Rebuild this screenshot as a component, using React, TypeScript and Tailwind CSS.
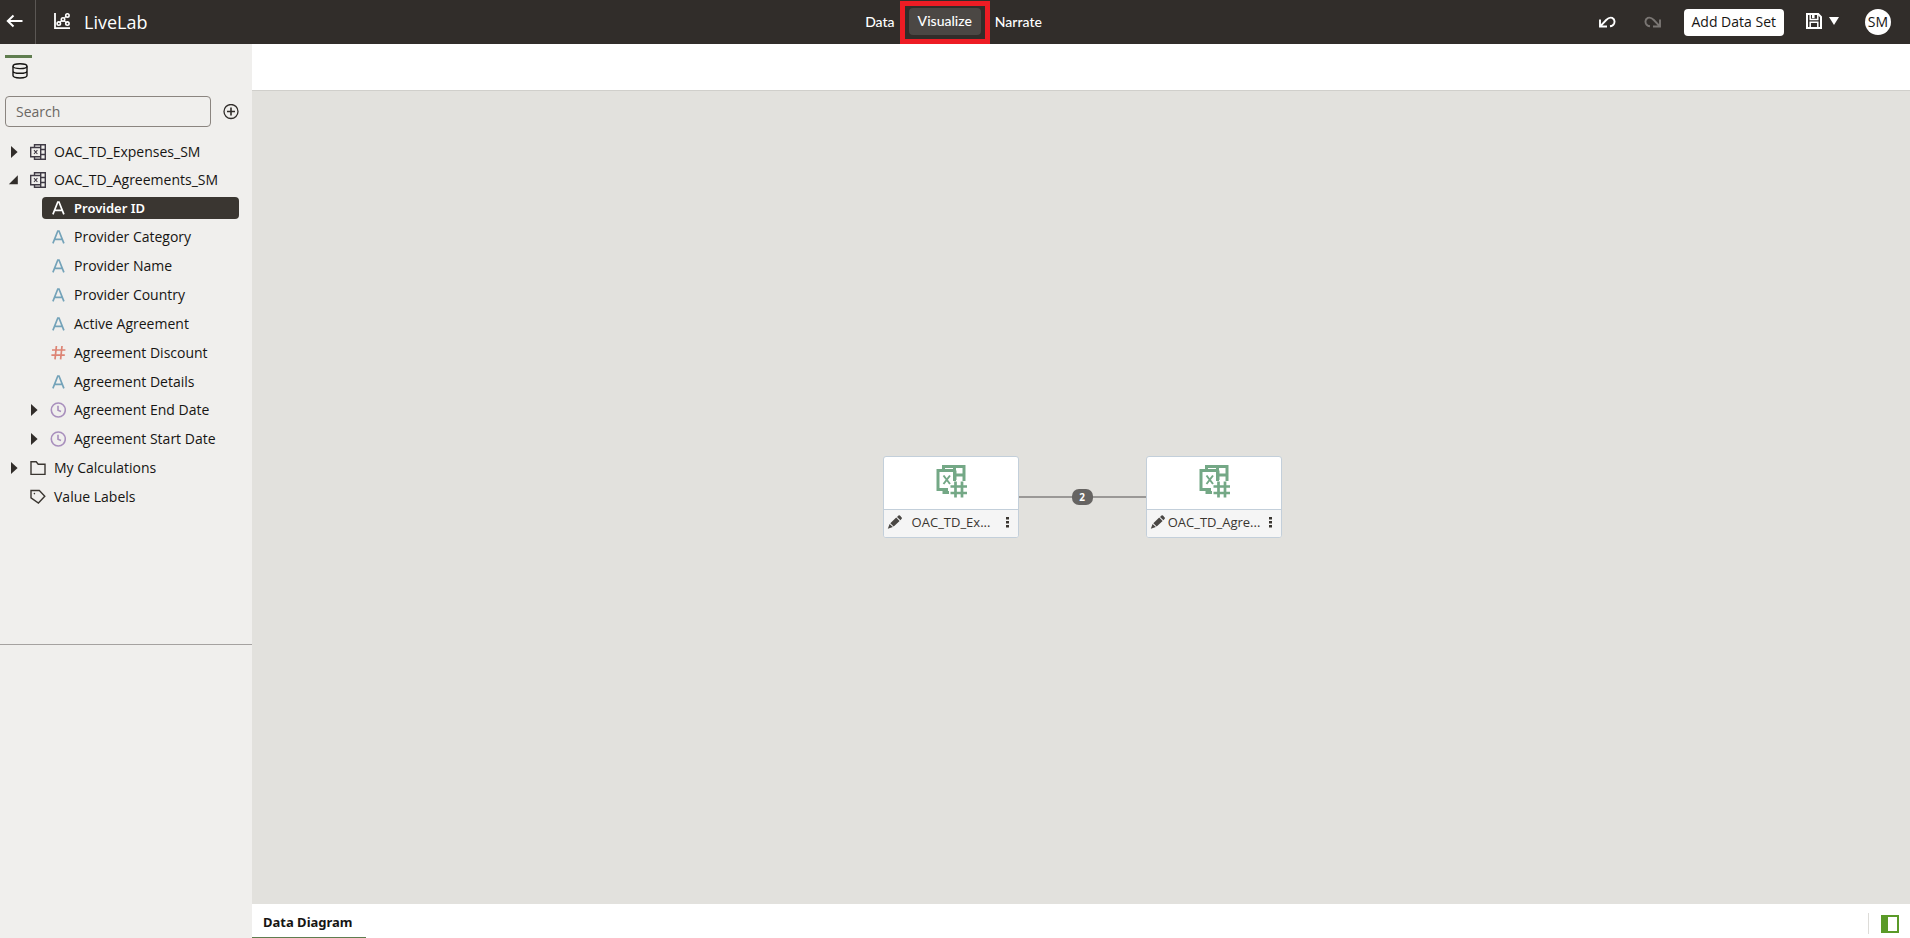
import React, { useState } from "react";

type IconKind = "text" | "number" | "date" | "sheet" | "folder" | "tag";

interface TreeNode {
  label: string;
  icon: IconKind;
  level: 0 | 1;
  state?: "open" | "closed";
  height: string;
}

const tree: TreeNode[] = [
  { label: "OAC_TD_Expenses_SM", icon: "sheet", level: 0, state: "closed", height: "h-[29px]" },
  { label: "OAC_TD_Agreements_SM", icon: "sheet", level: 0, state: "open", height: "h-7" },
  { label: "Provider ID", icon: "text", level: 1, height: "h-7" },
  { label: "Provider Category", icon: "text", level: 1, height: "h-[29px]" },
  { label: "Provider Name", icon: "text", level: 1, height: "h-[29px]" },
  { label: "Provider Country", icon: "text", level: 1, height: "h-[29px]" },
  { label: "Active Agreement", icon: "text", level: 1, height: "h-[29px]" },
  { label: "Agreement Discount", icon: "number", level: 1, height: "h-[29px]" },
  { label: "Agreement Details", icon: "text", level: 1, height: "h-[29px]" },
  { label: "Agreement End Date", icon: "date", level: 1, state: "closed", height: "h-7" },
  { label: "Agreement Start Date", icon: "date", level: 1, state: "closed", height: "h-[29px]" },
  { label: "My Calculations", icon: "folder", level: 0, state: "closed", height: "h-[29px]" },
  { label: "Value Labels", icon: "tag", level: 0, height: "h-[29px]" },
];

function NodeIcon({ kind, selected }: { kind: IconKind; selected: boolean }) {
  const base = "h-4 w-4 shrink-0 fill-none";
  switch (kind) {
    case "text":
      return (
        <svg viewBox="0 0 16 16" className={selected ? `${base} stroke-white` : `${base} stroke-[#74a3b9]`} strokeWidth="1.7">
          <path d="M2.9 14.4 7.8 2h1.2l4.9 12.4M4.6 10.4h7.6" />
        </svg>
      );
    case "number":
      return (
        <svg viewBox="0 0 16 16" className={`${base} stroke-[#dd8474]`} strokeWidth="1.7">
          <path d="M6.4 1 5 14.4M12 1l-1.4 13.4M2 5h13.4M1.4 10.2h13.4" />
        </svg>
      );
    case "date":
      return (
        <svg viewBox="0 0 16 16" className={`${base} stroke-[#a990bd]`} strokeWidth="1.6">
          <circle cx="8.3" cy="8" r="7" />
          <path d="M8 3.8v4.5l3 1.2" />
        </svg>
      );
    case "sheet":
      return (
        <svg viewBox="0 0 16 16" className={`${base} stroke-[#3f3a45]`} strokeWidth="1.4">
          <path d="M.7 3.5h10v9.2H.7zM4.5 3.5v-2.8h10.8v14.6H4.5v-2.6M10.7.7v14.6M10.7 5.5h4.6M10.7 10.5h4.6" />
          <path d="m4 6.2 3.4 3.8m0-3.8L4 10" strokeWidth="1.1" />
        </svg>
      );
    case "folder":
      return (
        <svg viewBox="0 0 16 16" className={`${base} stroke-[#3a3631]`} strokeWidth="1.4">
          <path d="M1 1.8h5.2l2 2.4H15v10.2H1z" />
        </svg>
      );
    case "tag":
      return (
        <svg viewBox="0 0 16 16" className={`${base} stroke-[#3a3631]`} strokeWidth="1.4">
          <path d="M1 1.5h8.3l5.5 5.7-6.4 6.9L1 8.9z" />
          <circle cx="4.4" cy="4.6" r=".8" className="fill-[#3a3631] stroke-none" />
        </svg>
      );
  }
}

function Twisty({ state }: { state: "open" | "closed" }) {
  return (
    <svg viewBox="0 0 10 12" className="h-3 w-[10px] fill-[#312d2a]">
      <path d={state === "open" ? "M9.8 1.2v9H.8z" : "M3 0 9.6 6 3 12z"} />
    </svg>
  );
}

function TreeRow({ node, selected, onSelect }: { node: TreeNode; selected: boolean; onSelect: () => void }) {
  return (
    <li className={`flex items-center pr-[13px] ${node.height} ${node.level === 1 ? "pl-7" : "pl-2"}`}>
      <span className="flex w-[14px] shrink-0 justify-start">
        {node.state && (
          <button type="button" aria-label={`Toggle ${node.label}`}>
            <Twisty state={node.state} />
          </button>
        )}
      </span>
      <button
        type="button"
        onClick={onSelect}
        className={`flex h-[22px] min-w-0 flex-1 items-center gap-2 rounded px-2 text-left whitespace-nowrap ${
          selected ? "bg-[#3a3631] font-['Noto_Sans',sans-serif] text-[13px] font-semibold text-white" : "text-[#161513]"
        }`}
      >
        <NodeIcon kind={node.icon} selected={selected} />
        {node.label}
      </button>
    </li>
  );
}

function DiagramNode({ label }: { label: string }) {
  return (
    <div className="h-[82px] w-[136px] overflow-hidden rounded-[3px] border border-[#c3cfda] bg-white">
      <div className="flex h-[53px] items-start justify-center border-b border-[#c3cfda] pt-[7px]">
        <svg viewBox="0 0 32 34" className="h-[34px] w-8 fill-none stroke-[#74a886]" strokeWidth="3">
          <path d="M8.5 5V2.5h20.5V17M19.5 2v15M19.5 11h9.5" />
          <path d="M19.5 6.5H3v19h10M20 6.5v9.5M9 25v3.5h5" />
          <path d="m8.5 11.5 6.5 8.5m0-8.5-6.5 8.5" strokeWidth="2" />
          <path d="M20.5 17.5v16M27 17.5v16M15.5 22.5H32M15.5 29H32" strokeWidth="2.7" />
        </svg>
      </div>
      <div className="flex h-[27px] items-center bg-[#f5f5f5] pb-[2px] pl-[3px]">
        <button type="button" aria-label={`Edit ${label}`} className="shrink-0">
          <svg viewBox="0 0 16 16" className="h-4 w-4 fill-[#4a4744]">
            <path d="m.8 14.8 1.8-4.9 3.3 3.1zM3.3 9.2l5.9-5.6 3.4 3.3-5.9 5.6zM10 2.9l1.5-1.4q.7-.5 1.4.1l1.8 1.8q.5.7 0 1.3l-1.3 1.5z" />
          </svg>
        </button>
        <span className="min-w-0 flex-1 pl-[2px] text-center text-[13px] whitespace-nowrap text-[#3a3631]">{label}</span>
        <button type="button" aria-label={`Menu for ${label}`} className="w-5 shrink-0">
          <svg viewBox="0 0 20 12" className="h-3 w-5 fill-[#3a3631]">
            <path d="M8 1h3v2.5H8zM8 5h3v2.5H8zM8 9h3v2.5H8z" />
          </svg>
        </button>
      </div>
    </div>
  );
}

export default function App() {
  const [selected, setSelected] = useState("Provider ID");

  return (
    <div className="flex min-h-screen flex-col bg-white font-['Open_Sans','Noto_Sans',sans-serif] text-sm text-[#161513]">
      <header className="grid h-11 grid-cols-[1fr_auto_1fr] items-center bg-[#312d2a] text-white">
        <div className="flex h-full items-center">
          <button type="button" aria-label="Back" className="flex h-full w-9 items-center border-r border-[#5b5754] pb-[2px] pl-[6px]">
            <svg viewBox="0 0 18 16" className="h-4 w-[18px] fill-none stroke-white" strokeWidth="2">
              <path d="M16.5 8H2M7.5 2.5 1.8 8l5.7 5.5" />
            </svg>
          </button>
          <svg viewBox="0 0 18 18" className="mb-[2px] ml-[17px] h-[18px] w-[18px] fill-none stroke-white" strokeWidth="1.6">
            <path d="M2 1v15.2H17" strokeWidth="1.8" />
            <path d="m6.8 10.4 1.8-1.7M11.2 8.9l1.8 1.4M11.4 5.8l1.6-1.2" strokeWidth="1.2" />
            <circle cx="5.8" cy="11.6" r="1.7" />
            <circle cx="10" cy="7.4" r="1.7" />
            <circle cx="14.4" cy="3.4" r="1.7" />
            <circle cx="14.4" cy="11.6" r="1.7" />
          </svg>
          <h1 className="ml-[13px] text-lg">LiveLab</h1>
        </div>

        <nav className="mr-[3px] mb-px flex items-center gap-[14px] font-['Lato',sans-serif] text-sm font-medium">
          <a href="#data">Data</a>
          <a href="#visualize" className="relative rounded bg-[#4b4744] px-[9px] pt-[3px] pb-[5px] leading-[19px]">
            Visualize
            <span className="pointer-events-none absolute -inset-x-[9px] -top-[7px] -bottom-[9px] border-5 border-[#ed1c24]" />
          </a>
          <a href="#narrate">Narrate</a>
        </nav>

        <div className="flex items-center justify-end pr-[19px]">
          <button type="button" aria-label="Undo">
            <svg viewBox="0 0 18 14" className="h-[14px] w-[18px] fill-none stroke-white" strokeWidth="1.9">
              <path d="M2 4.5v7h7M2.4 11.1 8.2 5q3-3.2 6-2.1 3.2 1.6 2 5.4-1.2 2.7-4.2 3" />
            </svg>
          </button>
          <button type="button" aria-label="Redo" disabled className="ml-7">
            <svg viewBox="0 0 18 14" className="h-[14px] w-[18px] fill-none stroke-[#7a7673]" strokeWidth="1.9">
              <path d="M16 4.5v7H9M15.6 11.1 9.8 5q-3-3.2-6-2.1-3.2 1.6-2 5.4 1.2 2.7 4.2 3" />
            </svg>
          </button>
          <button type="button" className="ml-[22px] h-[27px] rounded bg-white px-2 text-sm text-[#161513]">
            Add Data Set
          </button>
          <button type="button" aria-label="Save" className="mb-[2px] ml-[22px] flex items-center gap-[7px]">
            <svg viewBox="0 0 16 16" className="h-4 w-4 fill-none stroke-white" strokeWidth="2">
              <path d="M1 1h11.2L15 3.8V15H1z" />
              <path d="M4.2 1v5.5h7.6V1M4.2 15V9.2h7.6V15" strokeWidth="1.5" />
              <path d="M6 3.2h2.6" strokeWidth="4" />
            </svg>
            <svg viewBox="0 0 10 8" className="h-2 w-[10px] fill-white">
              <path d="M0 0h10L5 8z" />
            </svg>
          </button>
          <button type="button" aria-label="Account" className="ml-[26px] flex h-[26px] w-[26px] items-center justify-center rounded-full bg-white text-sm text-[#161513]">
            SM
          </button>
        </div>
      </header>

      <div className="flex flex-1">
        <aside className="flex w-[252px] shrink-0 flex-col bg-[#f0efed]">
          <div className="flex h-[600px] flex-col">
            <button type="button" aria-label="Data" className="mt-[11px] ml-[5px] flex w-[27px] flex-col items-center gap-[5px]">
              <span className="h-[3px] w-full bg-[#5f7d4f]" />
              <svg viewBox="0 0 16 16" className="ml-[3px] h-4 w-4 fill-none stroke-[#161513]" strokeWidth="1.4">
                <ellipse cx="8" cy="3.2" rx="7" ry="2.4" />
                <path d="M1 3.2v9.4c0 1.3 3 2.4 7 2.4s7-1.1 7-2.4V3.2M1 7.9c0 1.3 3 2.4 7 2.4s7-1.1 7-2.4" />
              </svg>
            </button>
            <div className="mt-[17px] flex items-center gap-3 pl-[5px]">
              <input
                type="text"
                aria-label="Search"
                placeholder="Search"
                className="h-[31px] w-[206px] rounded border border-[#8b8580] bg-transparent px-[10px] text-sm placeholder:text-[#6b6763]"
              />
              <button type="button" aria-label="Add">
                <svg viewBox="0 0 16 16" className="h-4 w-4 fill-none stroke-[#312d2a]" strokeWidth="1.3">
                  <circle cx="8" cy="7.5" r="7" />
                  <path d="M8 3.5v8M4 7.5h8" strokeWidth="1.6" />
                </svg>
              </button>
            </div>
            <ul className="mt-[10px]">
              {tree.map((node) => (
                <TreeRow key={node.label} node={node} selected={node.label === selected} onSelect={() => setSelected(node.label)} />
              ))}
            </ul>
          </div>
          <div className="flex-1 border-t border-[#a5a2a0]" />
        </aside>

        <main className="flex min-w-0 flex-1 flex-col">
          <div className="h-[47px] border-b border-[#d0cfcb] bg-white" />
          <div className="flex flex-1 items-center justify-center bg-[#e2e1dd] pb-[2px] pl-[2px]">
            <DiagramNode label="OAC_TD_Ex..." />
            <div className="flex w-[127px] items-center">
              <span className="h-[2px] flex-1 bg-[#9a9896]" />
              <button type="button" className="h-4 w-[21px] rounded-[7px] bg-[#666462] text-[10px] leading-4 font-bold text-white">
                2
              </button>
              <span className="h-[2px] flex-1 bg-[#9a9896]" />
            </div>
            <DiagramNode label="OAC_TD_Agre..." />
          </div>
          <footer className="flex h-[34px] items-center justify-between">
            <button
              type="button"
              className="h-full border-b border-[#5f7d4f] pt-1 pr-[13px] pl-[11px] font-['Noto_Sans',sans-serif] text-[13px] font-bold"
            >
              Data Diagram
            </button>
            <div className="mt-[5px] mr-[11px] flex h-[21px] items-center border-l border-[#dddcd8] pl-3">
              <button type="button" aria-label="Toggle side panel">
                <svg viewBox="0 0 18 18" className="h-[18px] w-[18px]">
                  <path d="M0 0h18v18H0z" className="fill-[#5a9a28]" />
                  <path d="M7 2h9v14H7z" className="fill-white" />
                </svg>
              </button>
            </div>
          </footer>
        </main>
      </div>
    </div>
  );
}
